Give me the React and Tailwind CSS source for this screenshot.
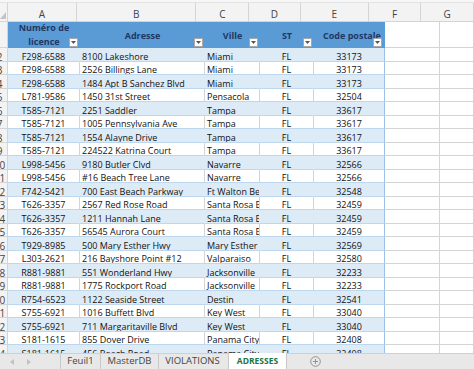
import React from "react";

const rows = [
  ["F298-6588", "8100 Lakeshore", "Miami", "FL", "33173"],
  ["F298-6588", "2526 Billings Lane", "Miami", "FL", "33173"],
  ["F298-6588", "1484 Apt B Sanchez Blvd", "Miami", "FL", "33173"],
  ["L781-9586", "1450 31st Street", "Pensacola", "FL", "32504"],
  ["T585-7121", "2251 Saddler", "Tampa", "FL", "33617"],
  ["T585-7121", "1005 Pennsylvania Ave", "Tampa", "FL", "33617"],
  ["T585-7121", "1554 Alayne Drive", "Tampa", "FL", "33617"],
  ["T585-7121", "224522 Katrina Court", "Tampa", "FL", "33617"],
  ["L998-5456", "9180 Butler Clvd", "Navarre", "FL", "32566"],
  ["L998-5456", "#16 Beach Tree Lane", "Navarre", "FL", "32566"],
  ["F742-5421", "700 East Beach Parkway", "Ft Walton Beach", "FL", "32548"],
  ["T626-3357", "2567 Red Rose Road", "Santa Rosa Beach", "FL", "32459"],
  ["T626-3357", "1211 Hannah Lane", "Santa Rosa Beach", "FL", "32459"],
  ["T626-3357", "56545 Aurora Court", "Santa Rosa Beach", "FL", "32459"],
  ["T929-8985", "500 Mary Esther Hwy", "Mary Esther", "FL", "32569"],
  ["L303-2621", "216 Bayshore Point #12", "Valparaiso", "FL", "32580"],
  ["R881-9881", "551 Wonderland Hwy", "Jacksonville", "FL", "32233"],
  ["R881-9881", "1775 Rockport Road", "Jacksonville", "FL", "32233"],
  ["R754-6523", "1122 Seaside Street", "Destin", "FL", "32541"],
  ["S755-6921", "1016 Buffett Blvd", "Key West", "FL", "33040"],
  ["S755-6921", "711 Margaritaville Blvd", "Key West", "FL", "33040"],
  ["S181-1615", "855 Dover Drive", "Panama City", "FL", "32408"],
  ["S181-1615", "456 Beach Road", "Panama City", "FL", "32408"],
];

function FilterBtn() {
  return (
    <div className="absolute right-[2px] bottom-[1px] w-[9px] h-[9px] bg-white border border-[#a8a8a8] flex items-center justify-center">
      <svg width="5" height="3" viewBox="0 0 5 3">
        <polygon points="0,0 5,0 2.5,3" fill="#555" />
      </svg>
    </div>
  );
}

function ColLetter({ w, children }) {
  return (
    <div className={`${w} h-full border-r border-[#d4d4d4] flex items-center justify-center pt-[4px] text-[#444]`}>
      {children}
    </div>
  );
}

export default function App() {
  return (
    <div className="w-[474px] h-[369px] overflow-hidden bg-white font-['Open_Sans',sans-serif] text-[9px] flex flex-col">
      <div className="h-[353px] shrink-0 overflow-hidden flex flex-col">
        {/* top strip */}
        <div className="h-[3px] bg-[#f7f7f7] border-b border-[#e2e2e2] shrink-0" />
        {/* column letters */}
        <div className="h-[19px] shrink-0 flex bg-[#f3f3f3] border-b border-[#d4d4d4] text-[10px]">
          <div className="w-[8px] h-full border-r border-[#d4d4d4] flex items-end justify-end pb-[2px] pr-[1px]">
            <svg width="6" height="7" viewBox="0 0 6 7">
              <polygon points="6,0 6,7 0,7" fill="#c4c4c4" />
            </svg>
          </div>
          <ColLetter w="w-[72px]">A</ColLetter>
          <ColLetter w="w-[125px]">B</ColLetter>
          <ColLetter w="w-[55px]">C</ColLetter>
          <ColLetter w="w-[54px]">D</ColLetter>
          <ColLetter w="w-[71px]">E</ColLetter>
          <ColLetter w="w-[55px]">F</ColLetter>
          <ColLetter w="w-[55px]">G</ColLetter>
        </div>
        {/* header row */}
        <div className="h-[26px] shrink-0 flex font-bold text-[#1f3864] leading-[14px]">
          <div className="w-[8px] h-full bg-[#f3f3f3] border-r border-b border-[#d4d4d4]" />
          <div className="relative w-[72px] h-full bg-[#5b9bd5] flex flex-col items-center justify-center">
            <span>Numéro de</span>
            <span>licence</span>
            <FilterBtn />
          </div>
          <div className="relative w-[125px] h-full bg-[#5b9bd5] flex items-center justify-center pt-[1px]">
            <span>Adresse</span>
            <FilterBtn />
          </div>
          <div className="relative w-[55px] h-full bg-[#5b9bd5] flex items-center justify-center pt-[1px]">
            <span>Ville</span>
            <FilterBtn />
          </div>
          <div className="relative w-[54px] h-full bg-[#5b9bd5] flex items-center justify-center pt-[1px]">
            <span>ST</span>
            <FilterBtn />
          </div>
          <div className="relative w-[71px] h-full bg-[#5b9bd5] border-r border-[#5b9bd5] flex items-center pl-[9px] pt-[1px] overflow-hidden whitespace-nowrap">
            <span>Code postale</span>
            <FilterBtn />
          </div>
          <div className="w-[55px] h-full border-r border-b border-[#d4d4d4]" />
          <div className="flex-1 h-full border-r border-b border-[#d4d4d4]" />
        </div>
        {/* data rows */}
        {rows.map((r, i) => {
          const n = i + 2;
          const band = n % 2 === 0;
          const cell = band
            ? "bg-[#ddebf7] border-r border-r-[#ddebf7]"
            : "bg-white border-r border-r-[#d4d4d4]";
          return (
            <div key={i} className="h-[13.5px] shrink-0 flex text-[#111] leading-[8px] whitespace-nowrap">
              <div className="w-[8px] h-full bg-[#f3f3f3] border-r border-b border-[#d4d4d4] overflow-hidden flex items-end">
                <div className="w-[18px] shrink-0 -ml-[9.5px] text-center text-[10px] leading-[8px] text-[#444]">{n}</div>
              </div>
              <div className={`w-[72px] h-full border-b border-b-[#bdd7ee] ${cell} flex items-end justify-center overflow-hidden`}>
                {r[0]}
              </div>
              <div className={`w-[125px] h-full border-b border-b-[#bdd7ee] ${cell} flex items-end pl-[2px] overflow-hidden`}>
                {r[1]}
              </div>
              <div className={`w-[55px] h-full border-b border-b-[#bdd7ee] ${cell} flex items-end pl-[2px] overflow-hidden`}>
                {r[2]}
              </div>
              <div className={`w-[54px] h-full border-b border-b-[#bdd7ee] ${cell} flex items-end justify-center overflow-hidden`}>
                {r[3]}
              </div>
              <div
                className={`w-[71px] h-full border-b border-b-[#bdd7ee] ${band ? "bg-[#ddebf7]" : "bg-white"} border-r border-r-[#9bc2e6] flex items-end justify-center overflow-hidden`}
              >
                {r[4]}
              </div>
              <div className="w-[55px] h-full border-r border-b border-[#d4d4d4]" />
              <div className="flex-1 h-full border-r border-b border-[#d4d4d4]" />
            </div>
          );
        })}
      </div>
      {/* sheet tabs */}
      <div className="h-[16px] shrink-0 flex items-stretch bg-[#e8e8e8] border-t border-[#d0d0d0] text-[9.5px] text-[#444]">
        <div className="w-[60px] flex items-center gap-[13px] pl-[10px]">
          <svg width="4" height="6" viewBox="0 0 4 6">
            <polygon points="4,0 4,6 0,3" fill="#c2c2c2" />
          </svg>
          <svg width="4" height="6" viewBox="0 0 4 6">
            <polygon points="0,0 0,6 4,3" fill="#c2c2c2" />
          </svg>
        </div>
        <div className="w-[40px] border-l border-[#c8c8c8] flex items-center justify-center">Feuil1</div>
        <div className="w-[58px] border-l border-[#c8c8c8] flex items-center justify-center">MasterDB</div>
        <div className="w-[68px] border-l border-[#c8c8c8] flex items-center justify-center">VIOLATIONS</div>
        <div className="w-[59px] ml-[2px] -mt-[1px] bg-white border-x border-[#c8c8c8] flex items-center justify-center font-bold text-[8.5px] text-[#217346]">
          ADRESSES
        </div>
        <div className="w-[56px] flex items-center justify-center">
          <svg width="11" height="11" viewBox="0 0 11 11">
            <circle cx="5.5" cy="5.5" r="4.8" fill="none" stroke="#8a8a8a" strokeWidth="0.9" />
            <line x1="5.5" y1="3" x2="5.5" y2="8" stroke="#8a8a8a" strokeWidth="0.9" />
            <line x1="3" y1="5.5" x2="8" y2="5.5" stroke="#8a8a8a" strokeWidth="0.9" />
          </svg>
        </div>
      </div>
    </div>
  );
}
